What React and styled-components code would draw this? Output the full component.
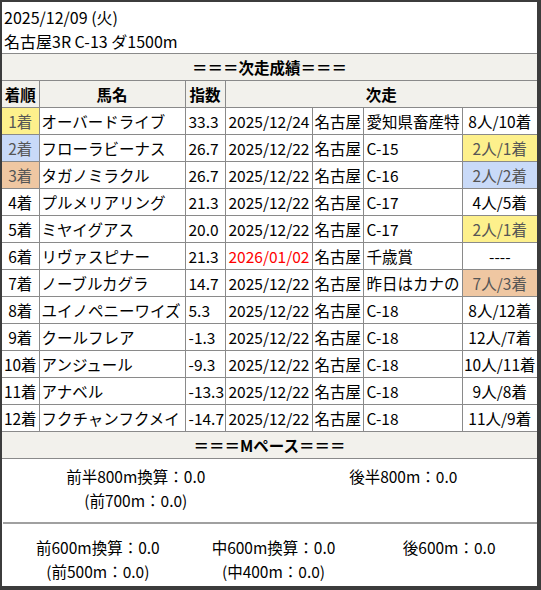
import React from 'react';
import styled, {createGlobalStyle} from 'styled-components';

const GlobalStyle = createGlobalStyle`
    html, body { margin:0; padding:0; background:#3c3c3c; }
    body { font-family:"Noto Sans CJK JP", "Noto Sans", sans-serif; }
`;

const Card = styled.div`
    width:535px;height:584px;margin:2px 0 0 2px;background:#fff;color:#000;
    font-size:15.5px;overflow:hidden;display:flex;flex-direction:column;
`;
const Head = styled.div`
    padding:3px 2px 0;line-height:24px;height:48px;font-size:16px;
`;
const Table = styled.table`
    width:535px;border-collapse:collapse;table-layout:fixed;
    td, th {
        border:1px solid #8a8a8a;height:26px;padding:0;line-height:26px;white-space:nowrap;overflow:hidden;
    }
    tr > :first-child { border-left:0; }
    tr > :last-child { border-right:0; }
`;
const Banner = styled.th`
    background:#f2f1ec;font-weight:bold;text-align:center;
`;
const HeadCell = styled.th`
    background:#f2f1ec;font-weight:bold;text-align:center;
`;
const Cell = styled.td`
    text-align:${p => (p.$center ? 'center' : 'left')};
    padding-left:${p => (p.$center ? 0 : p.$pad || 2)}px !important;
    background:${p => p.$bg || 'transparent'};
    color:${p => (p.$red ? '#ff0000' : p.$bg ? '#555' : '#000')};
`;
const PaceTop = styled.div`
    display:grid;grid-template-columns:1fr 1fr;padding:5px 0 10px;line-height:24px;text-align:center;
`;
const Divider = styled.div`
    height:2px;background:#a0a0a0;margin-left:1px;
`;
const PaceBottom = styled.div`
    display:grid;grid-template-columns:1fr 1fr 1fr;padding:11px 0 0 8px;line-height:24px;text-align:center;
`;

const colors = {
    y: '#fdf08c',
    b: '#c9daf8',
    o: '#efc7a2',
};

const rows = [
    ['1着', 'y', 'オーバードライブ', '33.3', '2025/12/24', '名古屋', '愛知県畜産特', '8人/10着', null],
    ['2着', 'b', 'フローラビーナス', '26.7', '2025/12/22', '名古屋', 'C-15', '2人/1着', 'y'],
    ['3着', 'o', 'タガノミラクル', '26.7', '2025/12/22', '名古屋', 'C-16', '2人/2着', 'b'],
    ['4着', null, 'プルメリアリング', '21.3', '2025/12/22', '名古屋', 'C-17', '4人/5着', null],
    ['5着', null, 'ミヤイグアス', '20.0', '2025/12/22', '名古屋', 'C-17', '2人/1着', 'y'],
    ['6着', null, 'リヴァスピナー', '21.3', '2026/01/02', '名古屋', '千歳賞', '----', null, true],
    ['7着', null, 'ノーブルカグラ', '14.7', '2025/12/22', '名古屋', '昨日はカナの', '7人/3着', 'o'],
    ['8着', null, 'ユイノペニーワイズ', '5.3', '2025/12/22', '名古屋', 'C-18', '8人/12着', null],
    ['9着', null, 'クールフレア', '-1.3', '2025/12/22', '名古屋', 'C-18', '12人/7着', null],
    ['10着', null, 'アンジュール', '-9.3', '2025/12/22', '名古屋', 'C-18', '10人/11着', null],
    ['11着', null, 'アナベル', '-13.3', '2025/12/22', '名古屋', 'C-18', '9人/8着', null],
    ['12着', null, 'フクチャンフクメイ', '-14.7', '2025/12/22', '名古屋', 'C-18', '11人/9着', null],
];

const App = () => (
    <>
        <GlobalStyle />
        <Card>
            <Head>
                <div>2025/12/09 (火)</div>
                <div>名古屋3R C-13 ダ1500m</div>
            </Head>
            <Table>
                <colgroup>
                    <col style={{width: 37}} />
                    <col style={{width: 146}} />
                    <col style={{width: 40}} />
                    <col style={{width: 87}} />
                    <col style={{width: 51}} />
                    <col style={{width: 99}} />
                    <col style={{width: 75}} />
                </colgroup>
                <tbody>
                    <tr><Banner colSpan={7}>＝＝＝次走成績＝＝＝</Banner></tr>
                    <tr>
                        <HeadCell>着順</HeadCell>
                        <HeadCell>馬名</HeadCell>
                        <HeadCell>指数</HeadCell>
                        <HeadCell colSpan={4}>次走</HeadCell>
                    </tr>
                    {rows.map((r, i) => (
                        <tr key={i}>
                            <Cell $center $bg={colors[r[1]]}>{r[0]}</Cell>
                            <Cell>{r[2]}</Cell>
                            <Cell $pad={3}>{r[3]}</Cell>
                            <Cell $pad={3} $red={r[9]}>{r[4]}</Cell>
                            <Cell>{r[5]}</Cell>
                            <Cell $pad={3}>{r[6]}</Cell>
                            <Cell $center $bg={colors[r[8]]}>{r[7]}</Cell>
                        </tr>
                    ))}
                    <tr><Banner colSpan={7}>＝＝＝Mペース＝＝＝</Banner></tr>
                </tbody>
            </Table>
            <PaceTop>
                <div>前半800m換算：0.0<br />(前700m：0.0)</div>
                <div>後半800m：0.0</div>
            </PaceTop>
            <Divider />
            <PaceBottom>
                <div>前600m換算：0.0<br />(前500m：0.0)</div>
                <div>中600m換算：0.0<br />(中400m：0.0)</div>
                <div>後600m：0.0</div>
            </PaceBottom>
        </Card>
    </>
);

export default App;
